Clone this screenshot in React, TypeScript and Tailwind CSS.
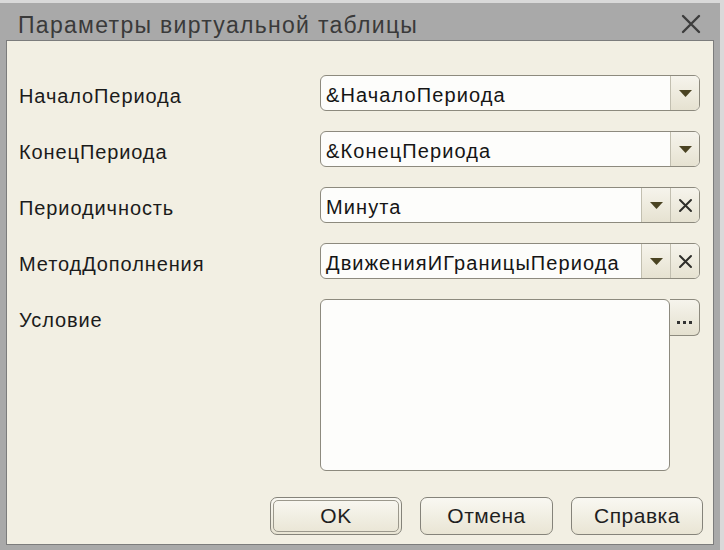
import React from 'react';

const font = { fontFamily: '"Liberation Sans", Arial, sans-serif' };

const Arrow: React.FC = () => (
  <svg width="13" height="7" viewBox="0 0 13 7">
    <polygon points="0,0 13,0 6.5,7" fill="#4a4322" />
  </svg>
);

const Cross: React.FC = () => (
  <svg width="15" height="15" viewBox="0 0 15 15">
    <path d="M2 2 L13 13 M13 2 L2 13" stroke="#2e2e2a" strokeWidth="2" strokeLinecap="round" />
  </svg>
);

interface FieldProps {
  value: string;
  clearable?: boolean;
}

const Field: React.FC<FieldProps> = ({ value, clearable }) => (
  <div className="flex h-[36px] w-[380px] items-stretch overflow-hidden rounded-[6px] border border-[#8d8a7e] bg-[#fdfdfb]">
    <div className="flex flex-1 items-center pl-[5px] pt-[3px] text-[20px] tracking-[1.1px] text-[#151515]">{value}</div>
    <div className="flex w-[29px] items-center justify-center border-l border-[#c2bfb0] bg-gradient-to-b from-[#f6f4ec] to-[#e6e2d1]">
      <Arrow />
    </div>
    {clearable && (
      <div className="flex w-[29px] items-center justify-center border-l border-[#c2bfb0] bg-gradient-to-b from-[#f6f4ec] to-[#e6e2d1]">
        <Cross />
      </div>
    )}
  </div>
);

const Row: React.FC<{ label: string; children: React.ReactNode }> = ({ label, children }) => (
  <div className="flex items-start">
    <div className="flex h-[36px] w-[301px] items-center pt-[5px] text-[20px] tracking-[0.9px] text-[#1b1b1b]">{label}</div>
    {children}
  </div>
);

const Button: React.FC<{ label: string; primary?: boolean; width: string }> = ({ label, primary, width }) => (
  <div
    className={`flex h-[38px] items-center justify-center rounded-[7px] border border-[#85837a] bg-gradient-to-b from-[#f9f8f2] to-[#e9e5d4] ${width} ${
      primary ? 'p-[2px]' : ''
    }`}
  >
    {primary ? (
      <div className="flex h-full w-full items-center justify-center rounded-[5px] border border-[#9b988c] text-[21px] tracking-[0.5px] text-[#1f1f1f]">
        {label}
      </div>
    ) : (
      <span className="text-[21px] tracking-[0.5px] text-[#1f1f1f]">{label}</span>
    )}
  </div>
);

export default function App() {
  return (
    <div className="h-[550px] w-[724px] bg-[#d9d9d9] pt-[3px]" style={font}>
      <div className="flex h-[547px] w-[720px] flex-col bg-[#a9a9a9] px-[6px] pb-[5px]">
        {/* title bar */}
        <div className="flex h-[37px] items-center justify-between pl-[12px] pr-[13px] pt-[8px]">
          <span className="text-[23px] tracking-[1.3px] text-[#3a3a3a]">Параметры виртуальной таблицы</span>
          <svg width="20" height="20" viewBox="0 0 20 20" className="-mt-[3px]">
            <path d="M2 2 L18 18 M18 2 L2 18" stroke="#3d3d3d" strokeWidth="2.4" strokeLinecap="round" />
          </svg>
        </div>

        {/* body */}
        <div className="flex flex-1 flex-col border border-[#7c7c7c] bg-[#f2efe3] pl-[12px] pr-[10px] pt-[34px] pb-[9px]">
          <div className="flex flex-col gap-[20px]">
            <Row label="НачалоПериода">
              <Field value="&НачалоПериода" />
            </Row>
            <Row label="КонецПериода">
              <Field value="&КонецПериода" />
            </Row>
            <Row label="Периодичность">
              <Field value="Минута" clearable />
            </Row>
            <Row label="МетодДополнения">
              <Field value="ДвиженияИГраницыПериода" clearable />
            </Row>
            <Row label="Условие">
              <div className="flex">
                <div className="h-[172px] w-[350px] rounded-[6px] border border-[#8d8a7e] bg-[#fdfdfb]" />
                <div className="flex h-[37px] w-[30px] items-center justify-center gap-[3px] rounded-r-[6px] border border-l-0 border-[#8d8a7e] bg-gradient-to-b from-[#f6f4ec] to-[#e4e0cf] pt-[10px]">
                  <span className="h-[3px] w-[3px] bg-[#333]" />
                  <span className="h-[3px] w-[3px] bg-[#333]" />
                  <span className="h-[3px] w-[3px] bg-[#333]" />
                </div>
              </div>
            </Row>
          </div>

          <div className="mt-auto flex justify-end gap-[18px]">
            <Button label="OK" primary width="w-[132px]" />
            <Button label="Отмена" width="w-[133px]" />
            <Button label="Справка" width="w-[132px]" />
          </div>
        </div>
      </div>
    </div>
  );
}
